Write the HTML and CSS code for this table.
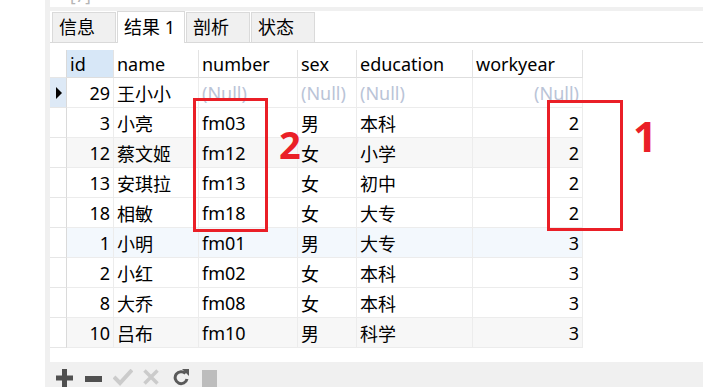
FILE: index.html
```html
<!DOCTYPE html>
<html lang="zh-CN">
<head>
  <meta charset="UTF-8" />
  <title>结果 1</title>
  <link rel="stylesheet" href="styles.css">
</head>
<body>
  <div class="gutter"></div>
  <div class="panel">
    <div class="top-strip"><span class="cut">[7]</span></div>
    <div class="band"></div>

    <div class="tabs">
      <div class="tab">信息</div>
      <div class="tab active">结果 1</div>
      <div class="tab">剖析</div>
      <div class="tab">状态</div>
    </div>

    <div class="grid">
      <div class="row head">
        <div class="cell ind"></div>
        <div class="cell sorted">id</div>
        <div class="cell">name</div>
        <div class="cell">number</div>
        <div class="cell">sex</div>
        <div class="cell">education</div>
        <div class="cell">workyear</div>
      </div>
      <div class="row">
        <div class="cell ind current"><span class="arrow"></span></div>
        <div class="cell num">29</div>
        <div class="cell">王小小</div>
        <div class="cell null">(Null)</div>
        <div class="cell null">(Null)</div>
        <div class="cell null">(Null)</div>
        <div class="cell num null">(Null)</div>
      </div>
      <div class="row">
        <div class="cell ind"></div>
        <div class="cell num">3</div>
        <div class="cell">小亮</div>
        <div class="cell">fm03</div>
        <div class="cell">男</div>
        <div class="cell">本科</div>
        <div class="cell num">2</div>
      </div>
      <div class="row alt">
        <div class="cell ind"></div>
        <div class="cell num">12</div>
        <div class="cell">蔡文姬</div>
        <div class="cell">fm12</div>
        <div class="cell">女</div>
        <div class="cell">小学</div>
        <div class="cell num">2</div>
      </div>
      <div class="row">
        <div class="cell ind"></div>
        <div class="cell num">13</div>
        <div class="cell">安琪拉</div>
        <div class="cell">fm13</div>
        <div class="cell">女</div>
        <div class="cell">初中</div>
        <div class="cell num">2</div>
      </div>
      <div class="row">
        <div class="cell ind"></div>
        <div class="cell num">18</div>
        <div class="cell">相敏</div>
        <div class="cell">fm18</div>
        <div class="cell">女</div>
        <div class="cell">大专</div>
        <div class="cell num">2</div>
      </div>
      <div class="row hover">
        <div class="cell ind"></div>
        <div class="cell num">1</div>
        <div class="cell">小明</div>
        <div class="cell">fm01</div>
        <div class="cell">男</div>
        <div class="cell">大专</div>
        <div class="cell num">3</div>
      </div>
      <div class="row">
        <div class="cell ind"></div>
        <div class="cell num">2</div>
        <div class="cell">小红</div>
        <div class="cell">fm02</div>
        <div class="cell">女</div>
        <div class="cell">本科</div>
        <div class="cell num">3</div>
      </div>
      <div class="row">
        <div class="cell ind"></div>
        <div class="cell num">8</div>
        <div class="cell">大乔</div>
        <div class="cell">fm08</div>
        <div class="cell">女</div>
        <div class="cell">本科</div>
        <div class="cell num">3</div>
      </div>
      <div class="row alt">
        <div class="cell ind"></div>
        <div class="cell num">10</div>
        <div class="cell">吕布</div>
        <div class="cell">fm10</div>
        <div class="cell">男</div>
        <div class="cell">科学</div>
        <div class="cell num">3</div>
      </div>
    </div>

    <div class="filler"></div>

    <div class="toolbar">
      <svg width="17" height="18" viewBox="0 0 17 18"><path d="M6 0h5v6.5h6v5h-6V18H6v-6.5H0v-5h6z" fill="#505050"/></svg>
      <svg width="17" height="18" viewBox="0 0 17 18"><rect x="0" y="7" width="17" height="6" fill="#505050"/></svg>
      <svg width="20" height="18" viewBox="0 0 20 18"><path d="M1 8l6 6L19 1" fill="none" stroke="#cbcbcb" stroke-width="4"/></svg>
      <svg width="16" height="18" viewBox="0 0 16 18"><path d="M1.5 1.5l13 13M14.5 1.5l-13 13" fill="none" stroke="#cbcbcb" stroke-width="3.5"/></svg>
      <svg width="16" height="18" viewBox="0 0 16 18"><path d="M12.5 4.5A6 6 0 1 0 14 10" fill="none" stroke="#5a5a5a" stroke-width="3"/><path d="M9 0h7v7z" fill="#5a5a5a"/></svg>
      <svg width="16" height="18" viewBox="0 0 16 18"><rect x="0" y="1" width="15" height="17" fill="#bdbdbd"/></svg>
    </div>
  </div>

  <div class="mark box-one"></div>
  <div class="mark box-two"></div>
  <span class="label label-one">1</span>
  <span class="label label-two">2</span>
</body>
</html>
```

FILE: styles.css
```css
body {
  margin: 0;
  height: 387px;
  display: flex;
  overflow: hidden;
  background: #fff;
  font-family: "Noto Sans", "Noto Sans CJK SC", sans-serif;
  font-size: 18px;
  color: #000;
}

.gutter {
  width: 45px;
  flex: none;
}

.panel {
  flex: 1;
  display: flex;
  flex-direction: column;
  border-left: 5px solid #f0f0f0;
}

.top-strip {
  height: 7px;
  overflow: hidden;
  padding-left: 20px;
}

.top-strip .cut {
  display: block;
  margin-top: -13px;
  line-height: 18px;
  color: #b5b5b5;
  font-size: 17px;
}

.band {
  height: 4px;
  background: #f0f0f0;
}

/* tabs */
.tabs {
  display: flex;
  align-items: flex-end;
  gap: 1px;
  height: 31px;
  padding-left: 2px;
  border-bottom: 1px solid #d9d9d9;
}

.tab {
  box-sizing: border-box;
  width: 64px;
  height: 30px;
  padding: 0 6px;
  background: #f0f0f0;
  border: 1px solid #dadada;
  border-bottom: none;
  line-height: 29px;
  white-space: nowrap;
}

.tab.active {
  width: 68px;
  height: 32px;
  margin-bottom: -1px;
  background: #fff;
  line-height: 31px;
}

/* data grid */
.grid {
  width: 533px;
  margin-top: 7px;
}

.row {
  display: grid;
  grid-template-columns: 17px 47px 85px 99px 59px 116px 110px;
  height: 30px;
}

.row.head {
  height: 28px;
}

.row.alt {
  background: #f7f7f7;
}

.row.hover {
  background: #f3f8fd;
}

.cell {
  box-sizing: border-box;
  display: flex;
  align-items: center;
  padding: 0 3px 0 3px;
  border-right: 1px solid #ececec;
  border-bottom: 1px solid #ececec;
  white-space: nowrap;
  overflow: hidden;
}

.head .cell {
  border-right-color: #e3e3e3;
  border-bottom-color: #dedede;
  background: #fff;
}

.head .cell.sorted {
  background: #d7e7f7;
}

.cell.num {
  justify-content: flex-end;
}

.cell.null {
  color: #bac4d7;
}

.cell.ind {
  padding: 0;
  background: #fff;
  border-right-color: #dadada;
  border-bottom-color: #e6e6e6;
}

.cell.ind.current {
  background: #dde9f6;
  justify-content: center;
}

.arrow {
  width: 0;
  height: 0;
  margin-left: 2px;
  border-left: 6px solid #000;
  border-top: 6px solid transparent;
  border-bottom: 6px solid transparent;
}

.filler {
  flex: 1;
}

/* bottom toolbar */
.toolbar {
  flex: none;
  height: 18px;
  display: grid;
  grid-template-columns: 29px 28px 30px 30px 29px 16px;
  align-items: start;
  padding: 7px 0 0 6px;
  background: #f0f0f0;
}

/* red annotations */
.mark {
  position: absolute;
  box-sizing: border-box;
  border: 3px solid #ea1f27;
}

.box-one {
  left: 547px;
  top: 100px;
  width: 76px;
  height: 131px;
}

.box-two {
  left: 193px;
  top: 98px;
  width: 75px;
  height: 134px;
}

.label {
  position: absolute;
  line-height: 1;
  font-family: "Noto Sans", sans-serif;
  font-weight: 700;
  color: #ea1f27;
}

.label-one {
  left: 633px;
  top: 115px;
  font-size: 42px;
}

.label-two {
  left: 279px;
  top: 125px;
  font-size: 38px;
}
```
